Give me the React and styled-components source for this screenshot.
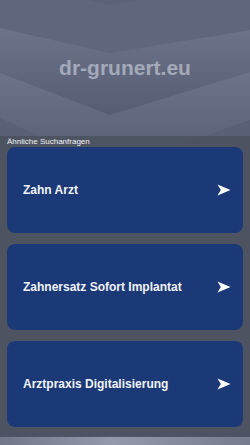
import styled, { createGlobalStyle } from "styled-components";

const GlobalStyle = createGlobalStyle`
  html, body {
    margin: 0;
    padding: 0;
    background: #5a6178;
    font-family: "Liberation Sans", Arial, sans-serif;
  }
`;

const searches = ["Zahn Arzt", "Zahnersatz Sofort Implantat", "Arztpraxis Digitalisierung"];

function Backdrop() {
  return (
    <BackdropSvg viewBox="0 0 250 445" preserveAspectRatio="none">
      <defs>
        <linearGradient id="band" x1="0" y1="0" x2="0" y2="1">
          <stop offset="0" stopColor="#6c738a" />
          <stop offset="1" stopColor="#565d73" />
        </linearGradient>
        <linearGradient id="bottom" x1="0" y1="0" x2="1" y2="0">
          <stop offset="0" stopColor="#717789" />
          <stop offset="0.45" stopColor="#959aaa" />
          <stop offset="1" stopColor="#767c8e" />
        </linearGradient>
      </defs>
      <rect x="0" y="0" width="250" height="445" fill="#5b6279" />
      <polygon points="0,-20 110,5 250,-18 250,30 110,53 0,28" fill="#5f667d" />
      <polygon points="0,28 110,53 250,30 250,72 110,115 0,73" fill="url(#band)" />
      <polygon points="0,73 110,115 250,72 250,120 110,170 0,118" fill="url(#band)" />
      <polygon points="0,118 110,170 250,120 250,445 0,445" fill="#596077" />
      <rect x="0" y="436" width="250" height="9" fill="url(#bottom)" />
    </BackdropSvg>
  );
}

function Arrow() {
  return (
    <svg width="14" height="12" viewBox="0 0 14 12">
      <path d="M0.5 0.5 L13.5 6 L0.5 11.5 L3.8 6 Z" fill="#ffffff" />
    </svg>
  );
}

export default function App() {
  return (
    <Page>
      <GlobalStyle />
      <Backdrop />
      <Header>
        <Domain>dr-grunert.eu</Domain>
      </Header>
      <Panel>
        <PanelTitle>Ähnliche Suchanfragen</PanelTitle>
        <Cards>
          {searches.map(s => (
            <Card key={s}>
              <CardText>{s}</CardText>
              <Arrow />
            </Card>
          ))}
        </Cards>
      </Panel>
    </Page>
  );
}

const Page = styled.div`
  position: relative;
  width: 250px;
  height: 445px;
  overflow: hidden;
`;

const BackdropSvg = styled.svg`
  position: absolute;
  inset: 0;
  width: 250px;
  height: 445px;
  z-index: 0;
`;

const Header = styled.header`
  position: relative;
  z-index: 1;
  height: 136px;
  display: flex;
  align-items: center;
  justify-content: center;
`;

const Domain = styled.h1`
  margin: 0;
  font-size: 21px;
  font-weight: 700;
  color: #a4aaba;
  letter-spacing: 0;
`;

const Panel = styled.section`
  position: relative;
  z-index: 1;
  height: 301px;
  box-sizing: border-box;
  background: rgba(76, 82, 96, 0.92);
  padding: 0 7px;
  display: flex;
  flex-direction: column;
`;

const PanelTitle = styled.div`
  font-size: 8px;
  line-height: 11px;
  color: #f2f3f6;
  padding-top: -1px;
  height: 11px;
`;

const Cards = styled.div`
  display: flex;
  flex-direction: column;
  gap: 11px;
  padding-top: 0;
`;

const Card = styled.div`
  height: 86px;
  box-sizing: border-box;
  background: #1c3977;
  border-radius: 8px;
  display: flex;
  align-items: center;
  justify-content: space-between;
  padding: 0 12px 0 16px;
`;

const CardText = styled.span`
  font-size: 12px;
  font-weight: 700;
  color: #f1f3f8;
`;
